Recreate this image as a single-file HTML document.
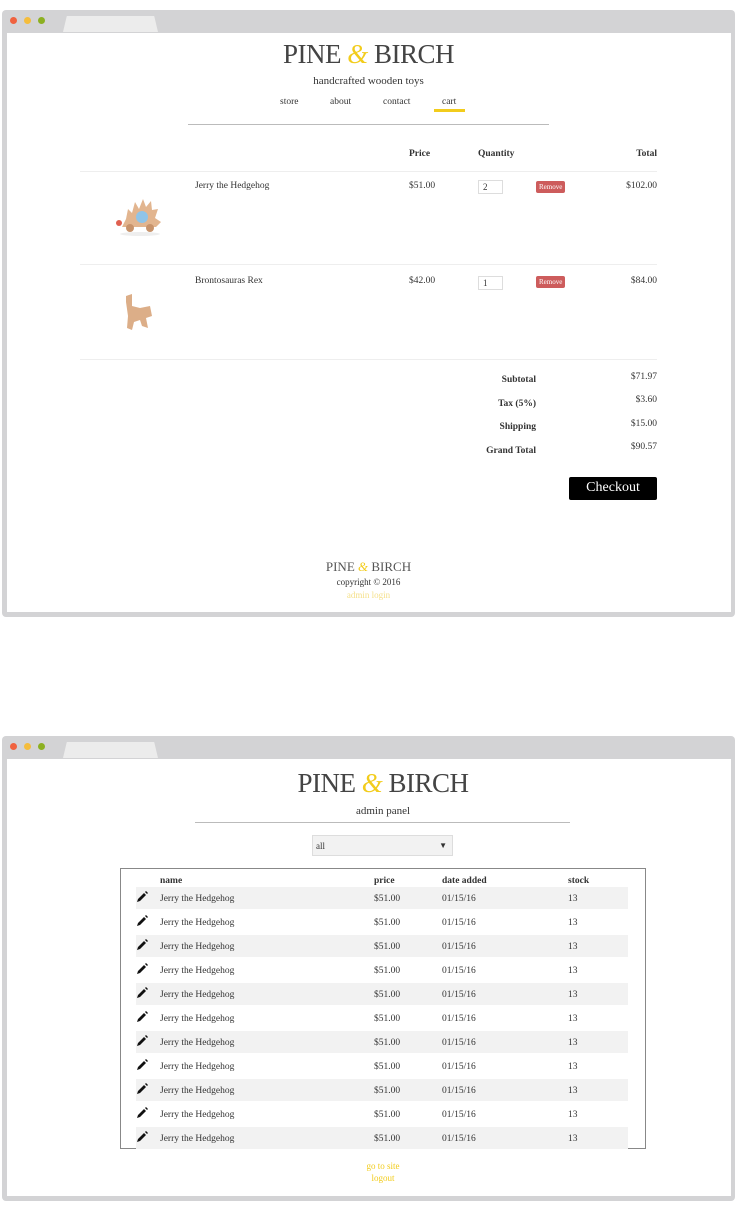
<!DOCTYPE html>
<html><head><style>
*{margin:0;padding:0;box-sizing:border-box}
body{width:744px;height:1207px;background:#fff;position:relative;font-family:"Liberation Serif",serif;color:#333;overflow:hidden}
.a{position:absolute}
.frame{position:absolute;background:#d3d3d5;border-radius:4px}
.inner{position:absolute;background:#fff}
.dot{position:absolute;width:7px;height:7px;border-radius:50%;top:6px}
.tab{position:absolute;background:#ececec;clip-path:polygon(0 100%,4% 0,96% 0,100% 100%)}
.logo{font-size:27px;color:#444;white-space:nowrap;letter-spacing:-0.5px}
.amp{color:#f2cc1c;font-style:italic}
.s{font-size:9.5px;white-space:nowrap}
.b{font-weight:bold}
.rm{background:#cd5c5c;color:#fff;font-size:7px;padding:2px 3px;border-radius:2px}
.qty{border:1px solid #ddd;width:25px;height:14px;font-size:9px;padding:1px 4px}
.row{position:absolute;left:136px;width:492px;height:22px}
.g{background:#f2f2f2}
</style></head><body>

<div class="frame" style="left:2px;top:10px;width:733px;height:607px"></div>
<div class="inner" style="left:7px;top:33px;width:724px;height:579px"></div>
<div class="tab" style="left:63px;top:16px;width:95px;height:16px"></div>
<div class="dot" style="left:10px;top:17px;background:#f0623f"></div>
<div class="dot" style="left:24px;top:17px;background:#f5bd3c"></div>
<div class="dot" style="left:38px;top:17px;background:#8cb021"></div>

<div class="a logo" style="left:0;width:737px;text-align:center;top:39px">PINE <span class="amp">&amp;</span> BIRCH</div>
<div class="a" style="left:0;width:737px;text-align:center;top:75px;font-size:11px">handcrafted wooden toys</div>
<div class="a s" style="left:280px;top:97px">store</div>
<div class="a s" style="left:330px;top:97px">about</div>
<div class="a s" style="left:383px;top:97px">contact</div>
<div class="a s" style="left:442px;top:97px">cart</div>
<div class="a" style="left:434px;top:109px;width:31px;height:3px;background:#f2cc1c"></div>
<div class="a" style="left:188px;top:124px;width:361px;height:1px;background:#bbb"></div>

<div class="a s b" style="left:409px;top:149px">Price</div>
<div class="a s b" style="left:478px;top:149px">Quantity</div>
<div class="a s b" style="left:620px;top:149px;width:37px;text-align:right">Total</div>
<div class="a" style="left:80px;top:171px;width:577px;height:1px;background:#eee"></div>

<div class="a s" style="left:195px;top:181px">Jerry the Hedgehog</div>
<div class="a s" style="left:409px;top:181px">$51.00</div>
<div class="a qty" style="left:478px;top:180px">2</div>
<div class="a rm" style="left:536px;top:181px">Remove</div>
<div class="a s" style="left:600px;top:181px;width:57px;text-align:right">$102.00</div>
<svg class="a" style="left:112px;top:193px" width="52" height="44"><path d="M14 26 L16 16 L20 20 L23 9 L27 16 L31 6 L34 14 L39 8 L40 17 L46 16 L43 25 L49 29 L44 34 L10 34 Z" fill="#e2b58f"/><circle cx="30" cy="24" r="6" fill="#8fc4e8"/><circle cx="18" cy="35" r="4" fill="#c8936b"/><circle cx="38" cy="35" r="4" fill="#c8936b"/><circle cx="7" cy="30" r="3" fill="#e06050"/><ellipse cx="28" cy="41" rx="20" ry="2" fill="#eee"/></svg>
<div class="a" style="left:80px;top:264px;width:577px;height:1px;background:#eee"></div>

<div class="a s" style="left:195px;top:276px">Brontosauras Rex</div>
<div class="a s" style="left:409px;top:276px">$42.00</div>
<div class="a qty" style="left:478px;top:276px">1</div>
<div class="a rm" style="left:536px;top:276px">Remove</div>
<div class="a s" style="left:600px;top:276px;width:57px;text-align:right">$84.00</div>
<svg class="a" style="left:118px;top:292px" width="40" height="42"><path d="M8 4 L14 2 L14 14 L22 16 L32 14 L34 24 L28 26 L30 36 L24 34 L22 28 L16 30 L14 38 L9 36 L10 24 L8 10 Z" fill="#dcae88"/></svg>
<div class="a" style="left:80px;top:359px;width:577px;height:1px;background:#eee"></div>

<div class="a s b" style="left:440px;top:375px;width:96px;text-align:right">Subtotal</div>
<div class="a s b" style="left:440px;top:399px;width:96px;text-align:right">Tax (5%)</div>
<div class="a s b" style="left:440px;top:422px;width:96px;text-align:right">Shipping</div>
<div class="a s b" style="left:440px;top:446px;width:96px;text-align:right">Grand Total</div>
<div class="a s" style="left:600px;top:372px;width:57px;text-align:right">$71.97</div>
<div class="a s" style="left:600px;top:395px;width:57px;text-align:right">$3.60</div>
<div class="a s" style="left:600px;top:419px;width:57px;text-align:right">$15.00</div>
<div class="a s" style="left:600px;top:442px;width:57px;text-align:right">$90.57</div>
<div class="a" style="left:569px;top:477px;width:88px;height:23px;background:#000;color:#fff;font-size:14px;text-align:center;line-height:22px;border-radius:2px">Checkout</div>

<div class="a" style="left:0;width:737px;text-align:center;top:559px;font-size:13px;color:#555">PINE <span class="amp">&amp;</span> BIRCH</div>
<div class="a" style="left:0;width:737px;text-align:center;top:577px;font-size:9px">copyright © 2016</div>
<div class="a" style="left:0;width:737px;text-align:center;top:590px;font-size:9px;color:#f5e08a">admin login</div>

<div class="frame" style="left:2px;top:736px;width:733px;height:465px"></div>
<div class="inner" style="left:7px;top:759px;width:724px;height:437px"></div>
<div class="tab" style="left:63px;top:742px;width:95px;height:16px"></div>
<div class="dot" style="left:10px;top:743px;background:#f0623f"></div>
<div class="dot" style="left:24px;top:743px;background:#f5bd3c"></div>
<div class="dot" style="left:38px;top:743px;background:#8cb021"></div>

<div class="a logo" style="left:0;width:766px;text-align:center;top:768px">PINE <span class="amp">&amp;</span> BIRCH</div>
<div class="a" style="left:0;width:766px;text-align:center;top:805px;font-size:11px">admin panel</div>
<div class="a" style="left:195px;top:822px;width:375px;height:1px;background:#bbb"></div>
<div class="a" style="left:312px;top:835px;width:141px;height:21px;background:#f2f2f2;border:1px solid #ddd;font-size:9px;padding:5px 3px">all<span style="position:absolute;right:5px;top:5px;font-size:8px">▼</span></div>

<div class="a" style="left:120px;top:868px;width:526px;height:281px;border:1px solid #888"></div>
<div class="a s b" style="left:160px;top:876px">name</div>
<div class="a s b" style="left:374px;top:876px">price</div>
<div class="a s b" style="left:442px;top:876px">date added</div>
<div class="a s b" style="left:568px;top:876px">stock</div>

<div id="rows"></div>
<script>
var h='';for(var i=0;i<11;i++){var t=887+i*24;h+='<div class="row'+(i%2==0?' g':'')+'" style="top:'+t+'px"></div>'+
'<svg class="a" style="left:136px;top:'+(t+4)+'px" width="12" height="12"><path d="M1 11 L2 8 L8 2 L10 4 L4 10 Z M9 1 L10 0 L12 2 L11 3 Z" fill="#111"/></svg>'+
'<div class="a s" style="left:160px;top:'+(t+7)+'px">Jerry the Hedgehog</div>'+
'<div class="a s" style="left:374px;top:'+(t+7)+'px">$51.00</div>'+
'<div class="a s" style="left:442px;top:'+(t+7)+'px">01/15/16</div>'+
'<div class="a s" style="left:568px;top:'+(t+7)+'px">13</div>';}
document.getElementById('rows').innerHTML=h;
</script>
<div class="a" style="left:0;width:766px;text-align:center;top:1161px;font-size:9px;color:#f2cc1c">go to site</div>
<div class="a" style="left:0;width:766px;text-align:center;top:1173px;font-size:9px;color:#f2cc1c">logout</div>
</body></html>
